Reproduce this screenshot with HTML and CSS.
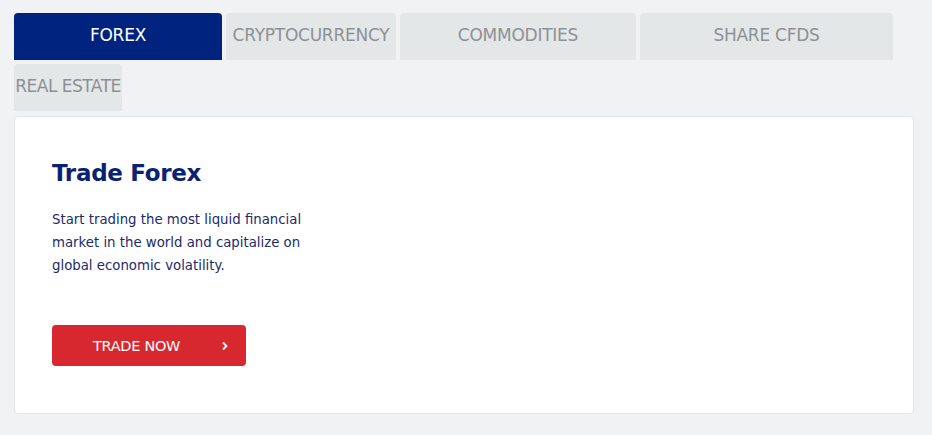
FILE: index.html
```html
<!DOCTYPE html>
<html>
<head>
<meta charset="utf-8">
<link rel="stylesheet" href="styles.css">
</head>
<body>
<div class="page">
  <div class="tabs">
    <div class="tab active t-forex">FOREX</div>
    <div class="tab t-crypto">CRYPTOCURRENCY</div>
    <div class="tab t-comm">COMMODITIES</div>
    <div class="tab t-share">SHARE CFDS</div>
    <div class="tab t-real">REAL ESTATE</div>
  </div>
  <div class="card">
    <h2 class="title">Trade Forex</h2>
    <p class="desc">Start trading the most liquid financial market in the world and capitalize on global economic volatility.</p>
    <a class="btn" href="#">
      <span class="btn-label">TRADE NOW</span>
      <svg class="chev" width="8" height="10" viewBox="0 0 8 10"><path d="M2 1.5 L5.5 5 L2 8.5" fill="none" stroke="#fff" stroke-width="1.8"/></svg>
    </a>
  </div>
</div>
</body>
</html>
```
FILE: styles.css
```css
html, body {
  margin: 0;
  padding: 0;
  background: #f1f2f4;
}
body {
  font-family: "DejaVu Sans", "Liberation Sans", sans-serif;
}
.page {
  padding: 13px 18px 0 14px;
}
.tabs {
  display: flex;
  flex-wrap: wrap;
  gap: 4px;
  width: 884px;
}
.tab {
  height: 47px;
  padding-bottom: 3px;
  display: flex;
  align-items: center;
  justify-content: center;
  background: #e3e7e8;
  color: #8d9194;
  font-size: 17px;
  letter-spacing: -0.25px;
  border-radius: 4px 4px 0 0;
  box-sizing: border-box;
  white-space: nowrap;
}
.tab.active {
  background: #00237f;
  color: #ffffff;
}
.t-forex { width: 208px; }
.t-crypto { width: 170px; }
.t-comm { width: 236px; }
.t-share { width: 253px; }
.t-real { width: 108px; letter-spacing: -0.5px; }
.card {
  margin-top: 5px;
  width: 900px;
  height: 298px;
  box-sizing: border-box;
  background: #ffffff;
  border: 1px solid #e4e6e8;
  border-radius: 4px;
  padding: 40px 37px;
}
.title {
  margin: 0;
  font-size: 23px;
  font-weight: bold;
  color: #0b2270;
  letter-spacing: -0.3px;
  line-height: 32px;
}
.desc {
  margin: 19px 0 0 0;
  width: 275px;
  font-size: 13.3px;
  line-height: 23px;
  color: #1d2b6a;
}
.btn {
  margin-top: 48px;
  width: 194px;
  height: 41px;
  background: #d8282f;
  border-radius: 4px;
  display: flex;
  align-items: center;
  text-decoration: none;
  color: #ffffff;
}
.btn-label {
  font-size: 14.5px;
  margin-left: 41px;
  letter-spacing: -0.3px;
}
.chev {
  margin-left: auto;
  margin-right: 17px;
}
```
